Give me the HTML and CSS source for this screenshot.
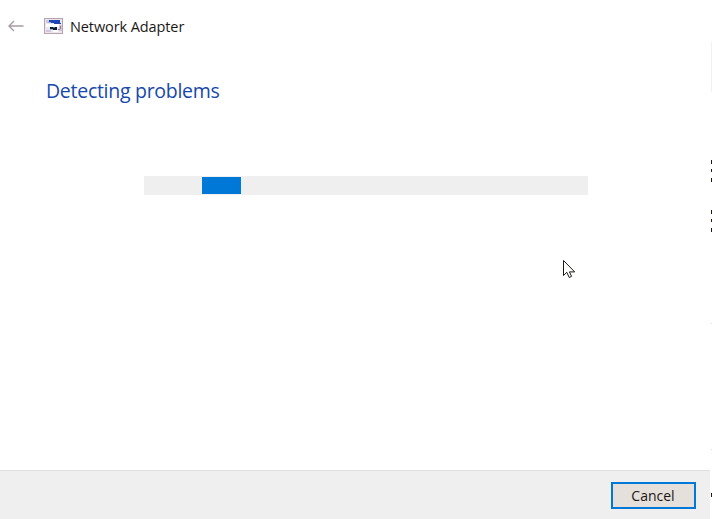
FILE: index.html
```html
<!DOCTYPE html>
<html lang="en">
<head>
<meta charset="utf-8">
<title>Network Adapter</title>
<link rel="stylesheet" href="styles.css">
</head>
<body>
<div class="window">
  <header class="titlebar">
    <svg class="back" width="16" height="12" viewBox="0 0 16 12"><path d="M15.5 6H1.2M6 1L1 6l5 5"/></svg>
    <svg class="app-icon" width="19" height="16" viewBox="0 0 19 16">
      <path fill="#b5a3ad" d="M0 0h19v16H0z"/>
      <path fill="#ece6f1" d="M1 1h17v14H1z"/>
      <path fill="#d0c7dc" d="M2 2h3v3H2zM15 7h3v6h-3zM2 12h5v2H2z"/>
      <path fill="#fff" d="M2 6h13v3H2zM9 12h5v2H9z"/>
      <path fill="#1f45b5" d="M5 2h11v3h1v1h-7V5H7V4H5z"/>
      <path fill="#8bb9e5" d="M4 4h3v1H4zM6 11h3v1H6z"/>
      <path fill="#171c28" d="M6 9h7v3H9v-1H6z"/>
      <path fill="#287ab8" d="M9 9h2v1H9z"/>
      <path fill="#92808e" d="M16 8h1v3h-1zM14 11h2v1h-2z"/>
    </svg>
    <span class="title">Network Adapter</span>
  </header>
  <main class="content">
    <h1 class="heading">Detecting problems</h1>
    <div class="progress"><div class="chunk"></div></div>
  </main>
  <footer class="footer"><button class="cancel">Cancel</button></footer>
</div>
<svg class="edge" width="1" height="519" viewBox="0 0 1 519">
  <path fill="#f0f0f0" d="M0 42h1v50H0z"/>
  <path fill="#1c1815" d="M0 160h1v4H0zM0 169h1v3H0zM0 178h1v4H0zM0 210h1v4H0zM0 219h1v3H0zM0 228h1v4H0zM0 493h1v4H0z"/>
  <path fill="#ddd" d="M0 323h1v1H0zM0 449h1v1H0z"/>
</svg>
<svg class="cursor" width="14" height="21" viewBox="0 0 14 21"><path d="M1.5 1.5v15l3.3-3.2 2.4 5.2 2.4-1.1-2.2-4.5h5.3z"/></svg>
</body>
</html>
```

FILE: styles.css
```css
* { box-sizing: border-box; }
body {
  margin: 0;
  background: #fff;
  font-family: "Open Sans", "Noto Sans", sans-serif;
  overflow: hidden;
}
.window {
  width: 710px;
  height: 519px;
  display: flex;
  flex-direction: column;
}
.titlebar {
  height: 52px;
  padding-left: 8px;
  display: flex;
  align-items: center;
}
.back { margin-right: 20px; fill: none; stroke: #a99ba2; stroke-width: 1.4; }
.app-icon { margin-right: 7px; }
.title { font-size: 14.5px; letter-spacing: -0.1px; color: #1c1715; white-space: nowrap; }
.content { flex: 1; }
.heading {
  margin: 25px 0 0 46px;
  height: 28px;
  font-size: 19.5px;
  line-height: 28px;
  font-weight: 400;
  letter-spacing: -0.28px;
  color: #1748ab;
}
.progress {
  width: 444px;
  height: 19px;
  margin: 71px 0 0 144px;
  padding: 1px 0 1px 58px;
  background: #efefef;
}
.chunk { width: 39px; height: 17px; background: #0078d7; }
.footer {
  height: 49px;
  padding: 11px 14px 0 0;
  display: flex;
  justify-content: flex-end;
  background: #efefef;
  border-top: 1px solid #dfdfdf;
}
.cancel {
  width: 85px;
  height: 27px;
  padding: 0 1px 0 0;
  border: 2px solid #0078d7;
  background: #e5e0dc;
  color: #1c1715;
  font: 14px/23px "Open Sans", "Noto Sans", sans-serif;
}
.edge { position: absolute; left: 711px; top: 0; }
.cursor {
  position: absolute;
  left: 562px;
  top: 259px;
  fill: #fff;
  stroke: #1c1815;
  stroke-width: 1;
}
```
